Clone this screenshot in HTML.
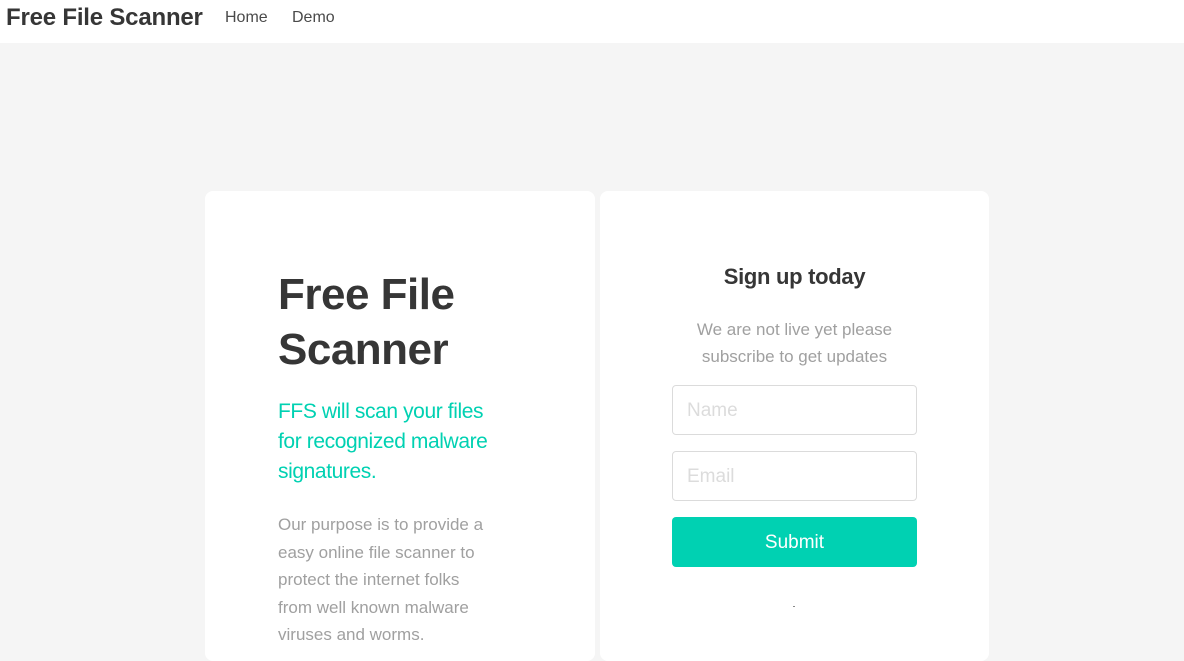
<!DOCTYPE html>
<html><head><style>
*{box-sizing:border-box;margin:0;padding:0}
body{width:1184px;height:647px;overflow:hidden;background:#f5f5f5;font-family:"Liberation Sans","DejaVu Sans",sans-serif;color:#4a4a4a;position:relative}
.nav{position:absolute;left:0;top:0;width:1184px;height:43px;background:#fff}
.brand{position:absolute;left:6px;top:4px;font-size:24px;font-weight:bold;color:#363636;letter-spacing:-0.2px}
.nl{position:absolute;top:9px;font-size:16px;color:#4a4a4a}
.card{position:absolute;top:191px;height:470px;background:#fff;border-radius:8px}
h1{position:absolute;left:73px;top:76px;font-size:44px;line-height:55px;color:#363636;font-weight:bold;letter-spacing:-0.5px}
.sub{position:absolute;left:73px;top:206px;width:300px;font-size:21px;line-height:30px;color:#00d1b2;letter-spacing:-0.4px}
.p{position:absolute;left:73px;top:320px;width:300px;font-size:17px;line-height:27.5px;color:#a0a0a0}
h2{position:absolute;left:0;width:389px;top:73px;text-align:center;font-size:22px;font-weight:bold;color:#363636;letter-spacing:-0.3px}
.p2{position:absolute;left:0;width:389px;top:125px;text-align:center;font-size:17px;line-height:27px;color:#a0a0a0}
.in{position:absolute;left:72px;width:245px;height:50px;border:1px solid #dbdbdb;border-radius:4px;font-size:19px;color:#dcdcdc;padding:14px 14px}
.btn{position:absolute;left:72px;top:326px;width:245px;height:50px;background:#00d1b2;border-radius:4px;color:#fff;font-size:19px;text-align:center;line-height:52px}
</style></head><body>
<div class="nav"><div class="brand">Free File Scanner</div><div class="nl" style="left:225px">Home</div><div class="nl" style="left:292px">Demo</div></div>
<div class="card" style="left:205px;width:390px">
<h1>Free File<br>Scanner</h1>
<div class="sub">FFS will scan your files<br>for recognized malware<br>signatures.</div>
<div class="p">Our purpose is to provide a<br>easy online file scanner to<br>protect the internet folks<br>from well known malware<br>viruses and worms.</div>
</div>
<div class="card" style="left:600px;width:389px">
<h2>Sign up today</h2>
<div class="p2">We are not live yet please<br>subscribe to get updates</div>
<div class="in" style="top:194px">Name</div>
<div class="in" style="top:260px">Email</div>
<div class="btn">Submit</div>
<div style="position:absolute;left:193px;top:415px;width:2px;height:1px;background:#888"></div>
</div>
</body></html>
